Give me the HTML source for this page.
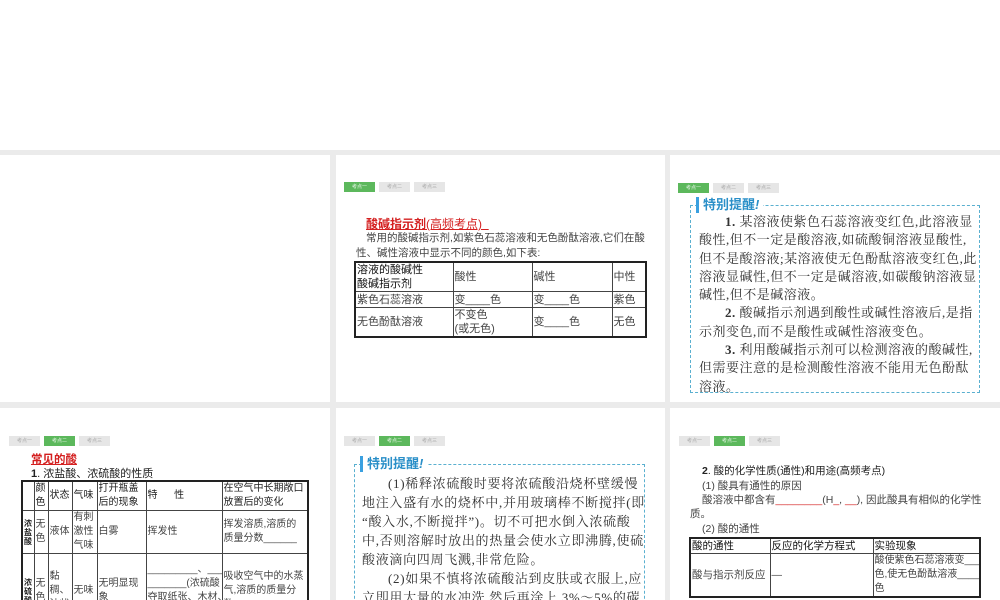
<!DOCTYPE html><html><head><meta charset="utf-8"><style>
*{margin:0;padding:0;box-sizing:border-box}
body{width:1000px;height:600px;overflow:hidden;background:#fff;position:relative;font-family:"Liberation Sans","Noto Sans CJK SC",sans-serif;color:#222}
.bg{position:absolute;left:0;top:150px;width:1000px;height:450px;background:#ebebeb}
.s{position:absolute;background:#fff;overflow:hidden}
.tabs{position:absolute;left:8px;display:flex;gap:4px}
.tabs span{width:31px;height:10px;background:#e6e6e6;color:#aaa;font-size:5px;line-height:10px;text-align:center}
.tabs span.on{background:#5cb85c;color:#e8f5e8}
.a{position:absolute;white-space:nowrap}
table{position:absolute;border-collapse:collapse;border:2px solid #222;font-size:11px;table-layout:fixed}
td{border:1px solid #444;padding:0 1px;vertical-align:middle;line-height:14px;color:#444;overflow:hidden}
.nw{white-space:nowrap}
.box{position:absolute;border:1px dashed #5ab0d0}
.tip{position:absolute;background:#fff;color:#2a8fc8;font-weight:bold;font-size:13px;padding-left:4px;border-left:3px solid #3aa0e0;line-height:16px}
.p{position:absolute;font-family:"Liberation Serif","Noto Serif CJK SC",serif;font-size:13px;letter-spacing:0.5px;color:#333;white-space:nowrap}
</style></head><body>
<div class="bg"></div>
<div class="s" style="left:0;top:155px;width:330px;height:247px"></div>

<div class="s" style="left:336px;top:155px;width:329px;height:247px">
<div class="tabs" style="top:27px"><span class="on">考点一</span><span>考点二</span><span>考点三</span></div>
<div class="a" style="left:30px;top:60px;font-size:12px;color:#d42020;font-weight:bold;text-decoration:underline">酸碱指示剂<span style="font-weight:normal">(高频考点)</span>&nbsp;&nbsp;</div>
<div class="a" style="left:30px;top:75px;font-size:10.5px;color:#444">常用的酸碱指示剂,如紫色石蕊溶液和无色酚酞溶液,它们在酸</div>
<div class="a" style="left:20px;top:90px;font-size:10.5px;color:#444">性、碱性溶液中显示不同的颜色,如下表:</div>
<table style="left:18px;top:106px;width:293px;height:73px">
<tr style="height:28px"><td style="width:98px;color:#111">溶液的酸碱性<br>酸碱指示剂</td><td style="width:79px">酸性</td><td style="width:80px">碱性</td><td>中性</td></tr>
<tr style="height:16px"><td>紫色石蕊溶液</td><td>变____色</td><td>变____色</td><td>紫色</td></tr>
<tr><td>无色酚酞溶液</td><td>不变色<br>(或无色)</td><td>变____色</td><td>无色</td></tr>
</table>
</div>

<div class="s" style="left:670px;top:155px;width:330px;height:247px">
<div class="tabs" style="top:28px"><span class="on">考点一</span><span>考点二</span><span>考点三</span></div>
<div class="box" style="left:20px;top:50px;width:290px;height:188px"></div>
<div class="tip" style="left:26px;top:42px">特别提醒<i>!</i>&nbsp;</div>
<div class="p" style="left:29px;top:58px;line-height:18.3px"><span style="padding-left:26px"><b>1.</b> 某溶液使紫色石蕊溶液变红色,此溶液显</span><br>酸性,但不一定是酸溶液,如硫酸铜溶液显酸性,<br>但不是酸溶液;某溶液使无色酚酞溶液变红色,此<br>溶液显碱性,但不一定是碱溶液,如碳酸钠溶液显<br>碱性,但不是碱溶液。<br><span style="padding-left:26px"><b>2.</b> 酸碱指示剂遇到酸性或碱性溶液后,是指</span><br>示剂变色,而不是酸性或碱性溶液变色。<br><span style="padding-left:26px"><b>3.</b> 利用酸碱指示剂可以检测溶液的酸碱性,</span><br>但需要注意的是检测酸性溶液不能用无色酚酞<br>溶液。</div>
</div>

<div class="s" style="left:0;top:408px;width:330px;height:192px">
<div class="tabs" style="top:28px;left:9px"><span>考点一</span><span class="on">考点二</span><span>考点三</span></div>
<div class="a" style="left:31px;top:43px;font-size:11.5px;color:#d42020;font-weight:bold;text-decoration:underline">常见的酸</div>
<div class="a" style="left:31px;top:57px;font-size:11px;color:#222"><b>1</b>. 浓盐酸、浓硫酸的性质</div>
<table style="left:21px;top:72px;width:288px;height:150px;font-size:10px">
<colgroup><col style="width:12px"><col style="width:14px"><col style="width:24px"><col style="width:25px"><col style="width:49px"><col style="width:76px"><col></colgroup>
<tr style="height:28px"><td></td><td style="color:#222">颜色</td><td style="color:#222">状态</td><td style="color:#222">气味</td><td style="color:#222">打开瓶盖后的现象</td><td style="color:#222">特&nbsp;&nbsp;&nbsp;&nbsp;&nbsp;&nbsp;性</td><td style="color:#222" class="nw">在空气中长期敞口<br>放置后的变化</td></tr>
<tr style="height:40px"><td style="font-size:8px;font-weight:bold;color:#222;line-height:9px">浓盐酸</td><td>无色</td><td>液体</td><td>有刺激性气味</td><td>白雾</td><td>挥发性</td><td>挥发溶质,溶质的质量分数______</td></tr>
<tr><td style="font-size:8px;font-weight:bold;color:#222;line-height:9px">浓硫酸</td><td>无色</td><td>黏稠、油状</td><td>无味</td><td>无明显现象</td><td class="nw">_________、____<br>_______(浓硫酸<br>夺取纸张、木材、<br>布料、皮肤里的</td><td>吸收空气中的水蒸气,溶质的质量分数</td></tr>
</table>
</div>

<div class="s" style="left:336px;top:408px;width:329px;height:192px">
<div class="tabs" style="top:28px"><span>考点一</span><span class="on">考点二</span><span>考点三</span></div>
<div class="box" style="left:18px;top:56px;width:291px;height:150px"></div>
<div class="tip" style="left:24px;top:48px">特别提醒<i>!</i>&nbsp;</div>
<div class="p" style="left:26px;top:66px;line-height:19px;letter-spacing:0.7px"><span style="padding-left:26px">(1)稀释浓硫酸时要将浓硫酸沿烧杯壁缓慢</span><br>地注入盛有水的烧杯中,并用玻璃棒不断搅拌(即<br>“酸入水,不断搅拌”)。切不可把水倒入浓硫酸<br>中,否则溶解时放出的热量会使水立即沸腾,使硫<br>酸液滴向四周飞溅,非常危险。<br><span style="padding-left:26px">(2)如果不慎将浓硫酸沾到皮肤或衣服上,应</span><br>立即用大量的水冲洗,然后再涂上 3%～5%的碳</div>
</div>

<div class="s" style="left:670px;top:408px;width:330px;height:192px">
<div class="tabs" style="top:28px;left:9px"><span>考点一</span><span class="on">考点二</span><span>考点三</span></div>
<div class="a" style="left:32px;top:55px;font-size:10.5px;color:#222"><b>2</b>. 酸的化学性质(通性)和用途(高频考点)</div>
<div class="a" style="left:32px;top:70px;font-size:10.5px;color:#444">(1) 酸具有通性的原因</div>
<div class="a" style="left:32px;top:84px;font-size:10.5px;color:#444">酸溶液中都含有<span style="color:#d42020">________</span>(H<span style="color:#d42020">_</span>, <span style="color:#d42020">__</span>), 因此酸具有相似的化学性</div>
<div class="a" style="left:20px;top:98px;font-size:10.5px;color:#444">质。</div>
<div class="a" style="left:32px;top:113px;font-size:10.5px;color:#444">(2) 酸的通性</div>
<table style="left:19px;top:129px;width:292px;height:60px;font-size:10.5px">
<colgroup><col style="width:80px"><col style="width:103px"><col></colgroup>
<tr style="height:14px"><td class="nw" style="color:#111">酸的通性</td><td class="nw" style="color:#111">反应的化学方程式</td><td style="color:#111">实验现象</td></tr>
<tr><td class="nw">酸与指示剂反应</td><td>—</td><td class="nw" style="font-size:10px">酸使紫色石蕊溶液变___<br>色,使无色酚酞溶液____<br>色</td></tr>
</table>
</div>
</body></html>
